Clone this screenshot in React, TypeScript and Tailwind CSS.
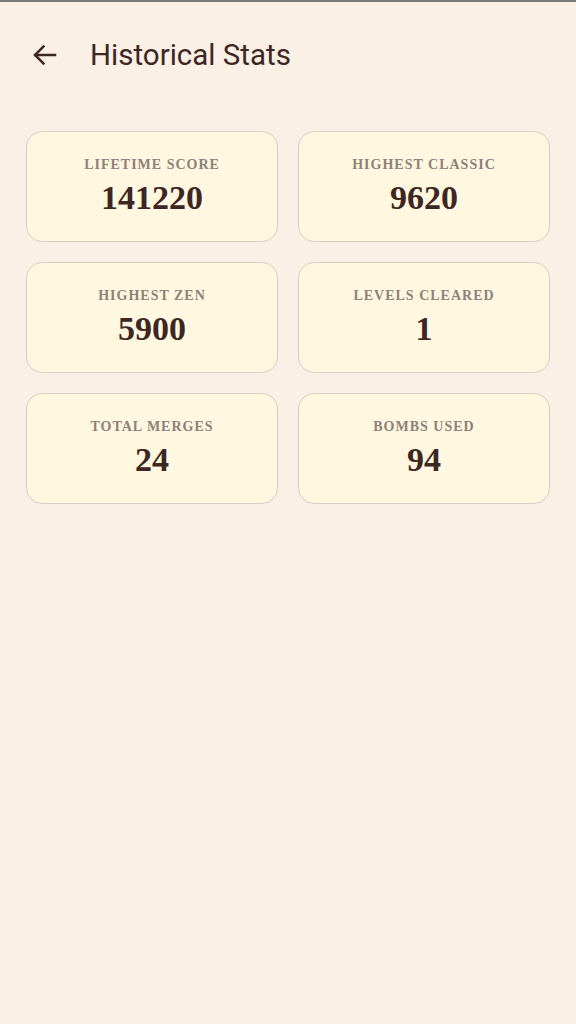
import React from "react";

const stats = [
  { label: "LIFETIME SCORE", value: "141220" },
  { label: "HIGHEST CLASSIC", value: "9620" },
  { label: "HIGHEST ZEN", value: "5900" },
  { label: "LEVELS CLEARED", value: "1" },
  { label: "TOTAL MERGES", value: "24" },
  { label: "BOMBS USED", value: "94" },
];

export default function App() {
  return (
    <div className="w-[576px] h-[1024px] bg-[#faf0e6] flex flex-col">
      <div className="h-[2px] bg-[#7d7b7a]" />
      <div className="flex items-center h-[104px] pt-[2px]">
        <div className="w-[90px] flex items-center pl-[30px]">
          <svg width="30" height="30" viewBox="0 0 24 24" fill="none" stroke="#3e2723" strokeWidth="2" strokeLinecap="square">
            <path d="M20 12H4.5" />
            <path d="M11.5 4.5L4 12l7.5 7.5" strokeLinecap="butt" />
          </svg>
        </div>
        <div className="text-[#3e2723] text-[29.5px] font-['Roboto',sans-serif]">Historical Stats</div>
      </div>
      <div className="grid grid-cols-2 gap-x-[20px] gap-y-[20px] px-[26px] pt-[25px]">
        {stats.map((s) => (
          <div
            key={s.label}
            className="h-[111px] rounded-[16px] border border-[#dacdc4] bg-[#fff7e0] flex flex-col items-center justify-center"
          >
            <div className="font-['Liberation_Serif',serif] font-bold text-[#8d8178] text-[14px] tracking-[1px] leading-none">
              {s.label}
            </div>
            <div className="font-['Liberation_Serif',serif] font-bold text-[#3e2723] text-[34px] leading-none mt-[9px]">
              {s.value}
            </div>
          </div>
        ))}
      </div>
    </div>
  );
}
